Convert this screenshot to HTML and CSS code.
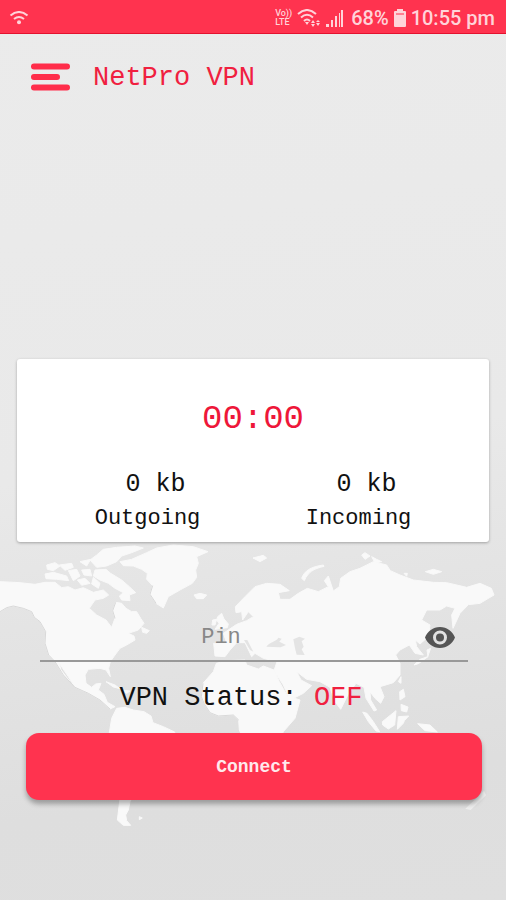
FILE: index.html
```html
<!DOCTYPE html>
<html lang="en">
<head>
<meta charset="utf-8">
<meta name="viewport" content="width=device-width, initial-scale=1">
<title>NetPro VPN</title>
<link rel="stylesheet" href="styles.css">
</head>
<body>
<div class="app">
  <svg class="map" viewBox="0 0 1518 900" aria-hidden="true">
    <g class="land">
      <path d="M0 125L60 128 105 133 135 127 165 127 185 143 205 140 225 150 250 143 280 157 310 150 326 165 310 175 285 180 268 205 290 225 318 240 335 262 345 235 338 212 347 187 365 190 378 205 395 215 410 215 422 235 432 250 415 270 385 280 402 288 405 300 380 315 360 325 345 345 331 365 326 385 331 410 318 390 300 385 265 388 255 405 258 430 275 442 287 432 303 430 295 450 312 463 322 487 345 500 330 507 300 480 265 460 225 442 205 410 178 370 183 390 210 425 190 405 165 365 146 345 135 310 137 275 120 245 103 232 95 215 70 205 40 198 20 203 0 215Z"/>
      <path d="M425 262L448 272 440 280 428 277ZM318 425L345 435 360 446 340 441ZM365 450L390 453 380 460Z"/>
      <path d="M140 75L165 68 180 78 160 92 142 88ZM135 102L160 97 200 108 206 122 170 118 138 116ZM178 75L215 70 220 82 195 91ZM205 92L230 88 240 108 220 122ZM240 65L272 58 260 78ZM245 90L270 88 275 108 252 105ZM232 120L255 115 270 130 245 136ZM270 60L290 45 310 28 350 22 405 18 430 24 395 38 365 48 350 65 320 78 290 82ZM285 90L318 88 332 100 365 120 388 140 407 158 388 165 390 182 365 180 358 168 370 158 345 145 325 130 300 120 280 108ZM280 112L300 130 295 145 275 132Z"/>
      <path d="M360 65L395 58 440 38 470 24 520 15 580 20 624 35 590 50 595 70 587 90 590 112 577 130 540 150 505 170 490 204 468 190 450 163 458 137 440 118 442 100 425 88 400 78 370 77Z"/>
      <path d="M582 165L600 160 620 165 610 176 590 176ZM653 230L665 220 672 237 685 252 682 263 645 268 657 250 650 240ZM638 240L650 238 645 255 636 255Z"/>
      <path d="M328 578L335 535 350 505 375 502 400 510 432 515 453 528 459 548 490 560 524 576 525 600 495 650 450 700 410 750 390 785 385 810 377 825 380 842 392 856 370 856 352 840 357 800 362 760 365 680ZM418 830L427 834 418 839Z"/>
      <path d="M649 370L680 362 735 360 740 375 775 387 790 378 822 390 838 425 862 468 900 480 885 535 850 575 820 650 770 680 740 620 718 570 716 540 700 525 655 528 630 518 612 490 604 470 609 430 640 395Z"/>
      <path d="M706 200L735 170 765 140 800 130 840 133 868 152 835 158 840 178 870 178 895 160 922 145 955 155 985 140 973 122 985 108 1000 153 1018 140 1022 115 1050 95 1080 85 1120 65 1160 75 1171 92 1200 105 1240 120 1300 127 1340 128 1400 142 1440 130 1474 145 1482 165 1440 190 1405 194 1380 220 1359 265 1355 225 1365 205 1340 198 1320 210 1280 210 1265 240 1290 255 1285 290 1260 312 1246 300 1250 320 1270 345 1245 340 1228 315 1200 330 1187 345 1200 370 1200 405 1180 428 1140 440 1152 470 1142 490 1125 475 1110 455 1112 480 1130 510 1122 513 1098 475 1092 442 1068 430 1045 462 1022 508 1003 482 990 442 960 425 920 418 890 395 903 420 935 437 910 460 870 480 850 435 822 392 831 365 790 355 765 340 755 350 735 308 710 308 690 330 675 350 645 348 641 310 680 308 670 280 710 253 740 242 760 230 745 215 728 240 725 215 708 218Z"/>
      <path d="M905 115C913 92 933 80 970 75L972 79C940 87 925 95 913 122ZM1085 45L1095 38 1110 48 1095 58ZM1115 50L1130 58 1145 65 1125 69ZM759 54L790 46 800 54 780 65ZM1276 95L1300 88 1325 95 1300 103ZM1212 100L1222 100 1220 109ZM1242 375L1260 358 1283 350 1292 325 1281 330 1284 350 1255 371ZM1195 425L1203 410 1203 430ZM1199 455L1210 448 1215 470 1200 480ZM1088 516L1101 520 1120 545 1139 575 1128 573 1105 545ZM1147 545L1188 512 1184 555 1165 567 1148 555ZM1195 530L1226 528 1213 542 1210 550 1192 568ZM1253 551L1290 555 1312 576 1275 572ZM1203 493L1224 501 1220 516 1204 512Z"/>
    </g>
    <g class="water">
      <path d="M799 320C810 304 828 306 835 293L845 296 838 305 858 315 842 322ZM880 298L898 290 915 296 905 304 911 320 905 328 914 345 890 344 885 325ZM732 300L742 300 760 335 750 330Z"/>
    </g>
    <path class="coast" d="M0 215L20 203 40 198 70 205 95 215 103 232 120 245 137 275 135 310 146 345 165 365 190 405 225 442 265 460 300 480 330 507M468 190L450 163 458 137M345 235L338 212 347 187M609 430L604 470 612 490 630 518 655 528 700 525 716 540"/>
    <path class="islet" d="M1396 806L1452 752 1458 766 1412 810Z"/>
  </svg>

  <div class="statusbar">
    <svg class="wifi" viewBox="0 0 20 14" aria-hidden="true"><path d="M1.500 4.500Q10-2.500 18.500 4.500M5 8Q10 4 15 8"/><circle cx="10" cy="11.300" r="2"/></svg>
    <div class="indicators">
      <span class="volte"><span>Vo))</span><span>LTE</span></span>
      <svg class="net" viewBox="0 0 24 18" aria-hidden="true"><path d="M1 5Q10-3 19 5M4 8.500Q10 3 16 8.500M7 12Q10 9 13 12"/><path class="fill" d="M8 13h4l-2 3ZM14 14l2-3 2 3ZM14 15h4l-2 3ZM19 13l2-2 2 2ZM19 14h4l-2 3Z"/></svg>
      <svg class="signal" viewBox="0 0 18 18" aria-hidden="true"><path d="M0 15h3v3H0ZM5 11h2v7H5ZM9 7h2v11H9ZM13 4h1v14h-1ZM15 1h2v17h-2Z"/></svg>
      <span class="percent">68%</span>
      <svg class="battery" viewBox="0 0 12 18" aria-hidden="true"><path d="M3 0h6v2h2q1 0 1 1v14q0 1-1 1H1q-1 0-1-1V3q0-1 1-1h2Z"/><path class="level" d="M2 4h8v2H2Z"/></svg>
      <span>10:55 pm</span>
    </div>
  </div>

  <header class="topbar">
    <button class="menu" type="button" aria-label="Menu">
      <svg viewBox="0 0 40 28" aria-hidden="true"><path d="M3.500 3.500h33M3.500 14h23M3.500 24.500h33"/></svg>
    </button>
    <h1 class="title">NetPro VPN</h1>
  </header>

  <main class="main">
    <section class="card">
      <div class="timer">00:00</div>
      <div class="stats">
        <div class="stat"><span class="value">0 kb</span><span class="label">Outgoing</span></div>
        <div class="stat"><span class="value">0 kb</span><span class="label">Incoming</span></div>
      </div>
    </section>
    <form class="form">
      <div class="field">
        <input type="password" placeholder="Pin" aria-label="Pin">
        <button class="eye" type="button" aria-label="Show pin">
          <svg viewBox="0 0 30 21" aria-hidden="true"><path fill-rule="evenodd" d="M15 0C8 0 2.500 4.200 0 10.500 2.500 16.800 8 21 15 21S27.500 16.800 30 10.500C27.500 4.200 22 0 15 0ZM15 3.500a7 7 0 1 1 0 14a7 7 0 1 1 0-14Z"/><circle cx="15" cy="10.500" r="4"/></svg>
        </button>
      </div>
      <p class="status">VPN Status: <span class="off">OFF</span></p>
      <button class="connect" type="button">Connect</button>
    </form>
  </main>
</div>
</body>
</html>
```

FILE: styles.css
```css
* {
  box-sizing: border-box;
}

body {
  margin: 0;
  font-family: "Liberation Mono", "Courier New", monospace;
  color: #111;
}

button,
input {
  font: inherit;
  border: 0;
  padding: 0;
  background: none;
}

svg {
  display: block;
}

.app {
  position: relative;
  display: flex;
  flex-direction: column;
  min-height: 100vh;
  background: linear-gradient(172deg, #ebebeb 0%, #e9e9e9 50%, #e4e4e4 65%, #dedede 85%, #dfdfdf 100%);
}

.map {
  position: absolute;
  top: 540px;
  left: 0;
  width: 100%;
}

.land {
  fill: #f9f9f9;
  stroke: #f9f9f9;
  stroke-width: 3;
  stroke-linejoin: round;
}

.water {
  fill: #e4e4e4;
}

.coast {
  fill: none;
  stroke: #d9d9d9;
  stroke-width: 3;
  stroke-linejoin: round;
}

.islet {
  fill: #eee;
}

.statusbar {
  position: relative;
  display: flex;
  align-items: center;
  justify-content: space-between;
  height: 34px;
  padding: 2px 11px 0 9px;
  background: #ff334f;
  border-bottom: 1px solid #e3122f;
  color: #ffd3d9;
  font-family: Roboto, sans-serif;
  font-size: 20px;
  font-weight: 500;
  line-height: 24px;
}

.indicators {
  display: flex;
  align-items: center;
  gap: 5px;
}

.percent {
  margin-left: 2px;
}

.statusbar svg {
  fill: #ffd3d9;
}

.wifi {
  width: 20px;
  height: 14px;
}

.wifi path,
.net path {
  fill: none;
  stroke: #ffd3d9;
  stroke-width: 2;
}

.net {
  width: 24px;
  height: 18px;
}

.statusbar .net .fill {
  fill: #ffd3d9;
  stroke: none;
}

.signal {
  width: 18px;
  height: 18px;
}

.battery {
  width: 12px;
  height: 18px;
}

.statusbar .level {
  fill: #ff7f91;
}

.volte {
  display: flex;
  flex-direction: column;
  font-size: 9px;
  line-height: 9px;
}

.topbar {
  position: relative;
  display: flex;
  align-items: center;
  gap: 22px;
  padding: 24px 30px;
}

.menu svg {
  width: 41px;
  height: 28px;
  fill: none;
  stroke: #ff2d4a;
  stroke-width: 6;
  stroke-linecap: round;
}

.title {
  margin: 0;
  padding-top: 2px;
  font-size: 27px;
  line-height: 36px;
  font-weight: 400;
  color: #f0203f;
}

.main {
  position: relative;
  padding: 239px 16px 0;
}

.card {
  margin: 0 1px;
  padding: 40px 25px 7px;
  background: #fff;
  border-radius: 3px;
  box-shadow: 0 1px 3px rgba(0, 0, 0, 0.3);
}

.timer {
  text-align: center;
  font-size: 34px;
  line-height: 40px;
  color: #ee1739;
}

.stats {
  display: grid;
  grid-template-columns: 1fr 1fr;
  margin-top: 28px;
}

.stat {
  display: flex;
  flex-direction: column;
  align-items: center;
}

.value {
  padding-left: 16px;
  font-size: 25px;
  line-height: 36px;
}

.label {
  font-size: 22px;
  line-height: 32px;
}

.form {
  padding: 72px 8px 0 10px;
}

.field {
  display: flex;
  align-items: center;
  margin: 0 14px;
  border-bottom: 2px solid #999;
}

.field input {
  flex: 1;
  min-width: 0;
  height: 46px;
  padding: 0;
  outline: 0;
  text-align: center;
  font-size: 22px;
}

.field input::placeholder {
  color: #888;
  opacity: 1;
}

.eye {
  display: flex;
  align-items: center;
  justify-content: center;
  width: 56px;
  height: 46px;
  margin-left: 10px;
}

.eye svg {
  width: 30px;
  height: 21px;
  fill: #555;
}

.status {
  margin: 18px 0 16px;
  padding-right: 26px;
  text-align: center;
  font-size: 27px;
  line-height: 37px;
}

.off {
  color: #f0203f;
}

.connect {
  width: 100%;
  height: 67px;
  border-radius: 13px;
  background: #ff334f;
  box-shadow: 0 4px 5px rgba(0, 0, 0, 0.3);
  color: #ffe9ec;
  font-size: 18px;
  font-weight: 700;
}
```
